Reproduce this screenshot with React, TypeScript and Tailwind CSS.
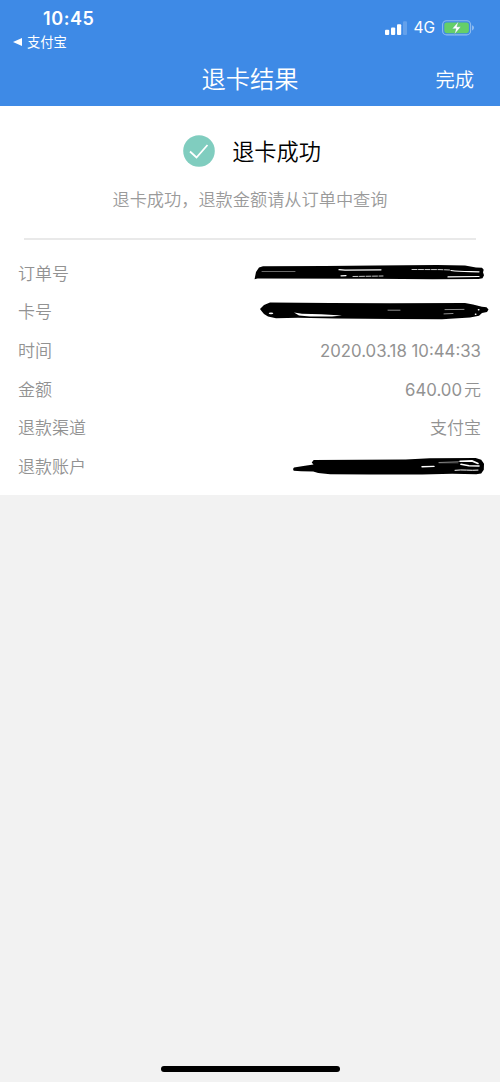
import type { ReactNode } from "react";

interface Row {
  label: string;
  value: ReactNode;
}

function Signal() {
  return (
    <svg viewBox="0 0 22 14" className="w-[22px] h-[14px]" fill="#fff">
      <rect x="0" y="8.8" width="4.200" height="5.200" rx="1" />
      <rect x="6" y="6.4" width="4.200" height="7.600" rx="1" />
      <rect x="12" y="3.3" width="4.200" height="10.700" rx="1" />
      <rect x="18" y="0.3" width="4" height="13.700" rx="1" opacity="0.2" />
    </svg>
  );
}

function Battery() {
  return (
    <svg viewBox="0 0 33 16" className="w-[33px] h-[16px]">
      <rect x="0.6" y="0.7" width="28" height="14.2" rx="4" fill="none" stroke="#8fbcf0" strokeWidth="1.1" />
      <rect x="2.3" y="2.4" width="24.6" height="10.8" rx="2.4" fill="#65cf68" />
      <path d="M30 5.200c1.400.5 2 1.400 2 2.600s-.6 2.100-2 2.600z" fill="#8fbcf0" />
      <path d="M16.500 1.500 10.200 8.700h3.800L12.500 14.300l6.300-7.500h-3.900z" fill="#fff" stroke="#4a9a8c" strokeWidth="0.3" />
    </svg>
  );
}

function OrderMark() {
  return (
    <svg viewBox="254 254 230 38" className="w-[230px] h-[38px] -mr-[3px]">
      <path d="M254.500 278.500 256 271l3-4.500 4-1.300 62-.2 50-.6 62-.3 28 .4 11 2 6 .3 1.700 2-.7 2.500 1 3-1.500 3-4 .8-46 .2-60-.6-115-.2-3 .7z" />
      <g fill="none" stroke="#fff" strokeLinecap="round">
        <path d="M262 270.500h33" strokeWidth="0.7" opacity="0.6" />
        <path d="M339 268.700l6 .4 36-.3M341 274.800l5-.2" strokeWidth="1.2" />
        <path d="M353 275.500l30-.5M412 268.500l28 .1 10 .4" strokeWidth="0.8" strokeDasharray="5 1.500" />
        <path d="M451 269.500c9 1.500 18 1 28 1.300M448 275.900l31-.4" strokeWidth="1.200" />
      </g>
    </svg>
  );
}

function CardMark() {
  return (
    <svg viewBox="259 293 230 38" className="w-[230px] h-[38px] -mr-[8px]">
      <path d="M260 308l4-4 6-2.500 60 .6 60 .2 75-.2 8 1.500 9 2.200 4.500.5 2 2.300-1.500 2.300-5 1-3 2.800-9 1.800-28 1.700-48-.1-58-.7-38-.6-22 .4-8-1.600-4-2.500-1.700-2z" />
      <g fill="#fff">
        <ellipse cx="271" cy="312.300" rx="2.300" ry="0.9" />
        <path d="M294 311.500l8 1.300 19 .5 21 1.200-10 .9h-22l-11-1z" />
      </g>
      <g fill="none" stroke="#fff" strokeLinecap="round" strokeWidth="0.7">
        <path d="M388 309.200h12M445 308.600l19-.2M444 312.900l9-.4" opacity="0.8" />
        <path d="M478.500 308.800h.3M475.500 313.300h.3" strokeWidth="1.600" />
      </g>
    </svg>
  );
}

function AccountMark() {
  return (
    <svg viewBox="293 449 192 38" className="w-[192px] h-[38px] -mr-[4px]">
      <path d="M293 469l1-1.600 11-1.700 8.500-1.300-1.800-2 2-2.400 92-.6 24-1.200 46-.3 5.500 1.800 2.800 4-.2 6-2.600 3.800-5 .8-24-.5-30 .6h-52l-40-.2-12-1.200-5-1.600-12-.1-7.500-.5z" />
      <g fill="none" stroke="#fff" strokeLinecap="round">
        <path d="M439 462.500l20-1M439 462.800h19" strokeWidth="0.600" opacity="0.600" />
        <path d="M460 461.300l12-.4 6 2.600M461 464.300l8 1.500 10 .2" strokeWidth="1.600" />
        <path d="M422 466.700l12-.3" strokeWidth="1.400" />
        <path d="M455 470.300c8-1 15 .5 23-.2" strokeWidth="1" />
      </g>
    </svg>
  );
}

const rows: Row[] = [
  { label: "订单号", value: <OrderMark /> },
  { label: "卡号", value: <CardMark /> },
  { label: "时间", value: <span className="text-[16.800px] font-normal">2020.03.18 10:44:33</span> },
  { label: "金额", value: <><span className="text-[16.800px] font-normal">640.00</span><span className="ml-0.5">元</span></> },
  { label: "退款渠道", value: "支付宝" },
  { label: "退款账户", value: <AccountMark /> },
];

export default function App() {
  return (
    <div className="flex flex-col w-[500px] h-[1082px] bg-[#f2f2f2] overflow-hidden font-['Inter','Noto_Sans_CJK_SC',sans-serif]">
      <header className="h-[106px] bg-[#3e8ae6] text-white">
        <div className="flex justify-between h-[54px]">
          <div className="pl-[13px]">
            <div className="pl-[30px] pt-[7px] text-[18px] leading-6 font-semibold tracking-[0.600px]">10:45</div>
            <div className="flex items-center gap-[5px] text-[13.300px] leading-[22px]">
              <svg viewBox="0 0 9 8" className="w-[9px] h-[8px]" fill="#fff"><path d="M9 0v8L0 4z" /></svg>
              支付宝
            </div>
          </div>
          <div className="flex items-center h-[55px] pr-[25px]">
            <Signal />
            <span className="ml-[6px] mr-[7px] text-[15.500px] leading-5">4G</span>
            <Battery />
          </div>
        </div>
        <div className="grid grid-cols-[1fr_auto_1fr] items-center h-[50px]">
          <h1 className="col-start-2 text-[24.300px] leading-8 font-[350]">退卡结果</h1>
          <button className="justify-self-end pr-[26px] pt-[2px] text-[19.300px] leading-8 font-[350]">完成</button>
        </div>
      </header>

      <main className="h-[389px] bg-white">
        <section className="mx-6 h-[134px] border-b-2 border-[#e9e9e9] pt-[29px] text-center">
          <div className="flex items-center justify-center gap-[17px] h-8 pl-[4px]">
            <svg viewBox="0 0 32 32" className="w-8 h-8">
              <circle cx="16" cy="16" r="15.800" fill="#80cdbf" />
              <path d="M7 16.500l6.500 6L24.500 10" fill="none" stroke="#fff" strokeWidth="1.800" />
            </svg>
            <h2 className="pt-px text-[22.200px] leading-8 text-black font-[350]">退卡成功</h2>
          </div>
          <p className="mt-[19px] text-[17.200px] leading-7 font-[350] text-[#9a9a9a]">退卡成功，退款金额请从订单中查询</p>
        </section>
        <dl className="pl-[18px] pr-[19px] pt-[15px] text-[17px] font-[350] text-[#929292]">
          {rows.map((r) => (
            <div key={r.label} className="flex items-center justify-between h-[38.700px]">
              <dt>{r.label}</dt>
              <dd>{r.value}</dd>
            </div>
          ))}
        </dl>
      </main>

      <div className="mt-auto mb-[10px] mx-auto w-[179px] h-[6px] rounded-full bg-black" />
    </div>
  );
}
